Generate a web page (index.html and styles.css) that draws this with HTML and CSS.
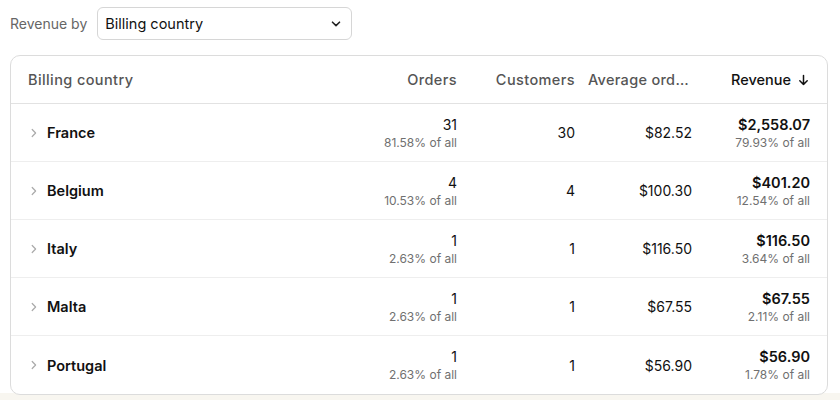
FILE: index.html
```html
<!DOCTYPE html>
<html>
<head>
<meta charset="utf-8">
<link rel="stylesheet" href="styles.css">
</head>
<body>
<div class="page">
  <div class="toolbar">
    <span class="toolbar-label">Revenue by</span>
    <div class="select">
      <span>Billing country</span>
      <svg class="select-chevron" width="10" height="6" viewBox="0 0 10 6"><path d="M1.5 1.2 L5 4.6 L8.5 1.2" fill="none" stroke="#222" stroke-width="1.6" stroke-linecap="round" stroke-linejoin="round"/></svg>
    </div>
  </div>
  <div class="card">
    <div class="row head">
      <div class="cell first">Billing country</div>
      <div class="cell num">Orders</div>
      <div class="cell num">Customers</div>
      <div class="cell num trunc">Average order value</div>
      <div class="cell num active">Revenue
        <svg class="sort" width="11" height="12" viewBox="0 0 11 12"><path d="M5.5 1.5 V10.5 M1.8 6.8 L5.5 10.5 L9.2 6.8" fill="none" stroke="#111" stroke-width="1.5" stroke-linecap="round" stroke-linejoin="round"/></svg>
      </div>
    </div>
    <div class="row">
      <div class="cell first"><svg class="chev" width="6" height="10" viewBox="0 0 6 10"><path d="M1.2 1.5 L4.6 5 L1.2 8.5" fill="none" stroke="#aaa" stroke-width="1.2" stroke-linecap="round" stroke-linejoin="round"/></svg><span class="name">France</span></div>
      <div class="cell num"><div class="main">31</div><div class="sub">81.58% of all</div></div>
      <div class="cell num">30</div>
      <div class="cell num">$82.52</div>
      <div class="cell num"><div class="main bold">$2,558.07</div><div class="sub">79.93% of all</div></div>
    </div>
    <div class="row">
      <div class="cell first"><svg class="chev" width="6" height="10" viewBox="0 0 6 10"><path d="M1.2 1.5 L4.6 5 L1.2 8.5" fill="none" stroke="#aaa" stroke-width="1.2" stroke-linecap="round" stroke-linejoin="round"/></svg><span class="name">Belgium</span></div>
      <div class="cell num"><div class="main">4</div><div class="sub">10.53% of all</div></div>
      <div class="cell num">4</div>
      <div class="cell num">$100.30</div>
      <div class="cell num"><div class="main bold">$401.20</div><div class="sub">12.54% of all</div></div>
    </div>
    <div class="row">
      <div class="cell first"><svg class="chev" width="6" height="10" viewBox="0 0 6 10"><path d="M1.2 1.5 L4.6 5 L1.2 8.5" fill="none" stroke="#aaa" stroke-width="1.2" stroke-linecap="round" stroke-linejoin="round"/></svg><span class="name">Italy</span></div>
      <div class="cell num"><div class="main">1</div><div class="sub">2.63% of all</div></div>
      <div class="cell num">1</div>
      <div class="cell num">$116.50</div>
      <div class="cell num"><div class="main bold">$116.50</div><div class="sub">3.64% of all</div></div>
    </div>
    <div class="row">
      <div class="cell first"><svg class="chev" width="6" height="10" viewBox="0 0 6 10"><path d="M1.2 1.5 L4.6 5 L1.2 8.5" fill="none" stroke="#aaa" stroke-width="1.2" stroke-linecap="round" stroke-linejoin="round"/></svg><span class="name">Malta</span></div>
      <div class="cell num"><div class="main">1</div><div class="sub">2.63% of all</div></div>
      <div class="cell num">1</div>
      <div class="cell num">$67.55</div>
      <div class="cell num"><div class="main bold">$67.55</div><div class="sub">2.11% of all</div></div>
    </div>
    <div class="row last">
      <div class="cell first"><svg class="chev" width="6" height="10" viewBox="0 0 6 10"><path d="M1.2 1.5 L4.6 5 L1.2 8.5" fill="none" stroke="#aaa" stroke-width="1.2" stroke-linecap="round" stroke-linejoin="round"/></svg><span class="name">Portugal</span></div>
      <div class="cell num"><div class="main">1</div><div class="sub">2.63% of all</div></div>
      <div class="cell num">1</div>
      <div class="cell num">$56.90</div>
      <div class="cell num"><div class="main bold">$56.90</div><div class="sub">1.78% of all</div></div>
    </div>
  </div>
</div>
</body>
</html>
```
FILE: styles.css
```css
html, body {
  margin: 0;
  padding: 0;
}
body {
  width: 840px;
  height: 400px;
  overflow: hidden;
  font-family: Inter, "Liberation Sans", sans-serif;
  color: #111;
  background: linear-gradient(to bottom, #ffffff 0, #ffffff 393px, #f8f6f0 393px);
}
.page {
  padding: 7px 12px 0 10px;
}
.toolbar {
  display: flex;
  align-items: center;
  gap: 10px;
  height: 33px;
}
.toolbar-label {
  font-size: 14px;
  color: #666;
}
.select {
  box-sizing: border-box;
  width: 255px;
  height: 33px;
  border: 1px solid #d6d6d6;
  border-radius: 6px;
  display: flex;
  align-items: center;
  justify-content: space-between;
  padding: 0 10px 0 7px;
  font-size: 14.5px;
  color: #111;
}
.select-chevron {
  display: block;
}
.card {
  margin-top: 15px;
  width: 818px;
  box-sizing: border-box;
  border: 1px solid #dcdcdc;
  border-radius: 10px;
  background: #fff;
  overflow: hidden;
}
.row {
  display: grid;
  grid-template-columns: 1fr 104px 104px 104px 104px;
  column-gap: 14px;
  padding: 0 17px 0 17px;
  height: 58px;
  align-items: center;
  border-bottom: 1px solid #eeeeee;
  box-sizing: border-box;
}
.row > .cell:nth-child(2),
.row > .cell:nth-child(3) {
  margin-right: -1px;
}
.row.head {
  height: 48px;
  border-bottom: 1px solid #e2e2e2;
  font-size: 14.5px;
  font-weight: 500;
  color: #555;
  letter-spacing: 0.4px;
}
.row.last {
  border-bottom: none;
  height: 58px;
}
.cell {
  white-space: nowrap;
  font-size: 14px;
}
.head .cell {
  font-size: 14.5px;
}
.first {
  display: flex;
  align-items: center;
}
.num {
  text-align: right;
}
.trunc {
  overflow: hidden;
  text-overflow: ellipsis;
  letter-spacing: 0.3px;
}
.active {
  color: #111;
  letter-spacing: 0;
  display: flex;
  justify-content: flex-end;
  align-items: center;
  gap: 7px;
  padding-right: 1px;
}
.sort {
  display: block;
}
.chev {
  display: block;
  margin-left: 3px;
  margin-right: 10px;
}
.name {
  font-weight: 600;
  font-size: 14.5px;
}
.main {
  font-size: 14px;
  line-height: 18px;
  padding-top: 1px;
}
.main.bold {
  font-weight: 600;
  font-size: 14.5px;
}
.sub {
  font-size: 12px;
  line-height: 16px;
  color: #707070;
  margin-top: 1px;
}
```
